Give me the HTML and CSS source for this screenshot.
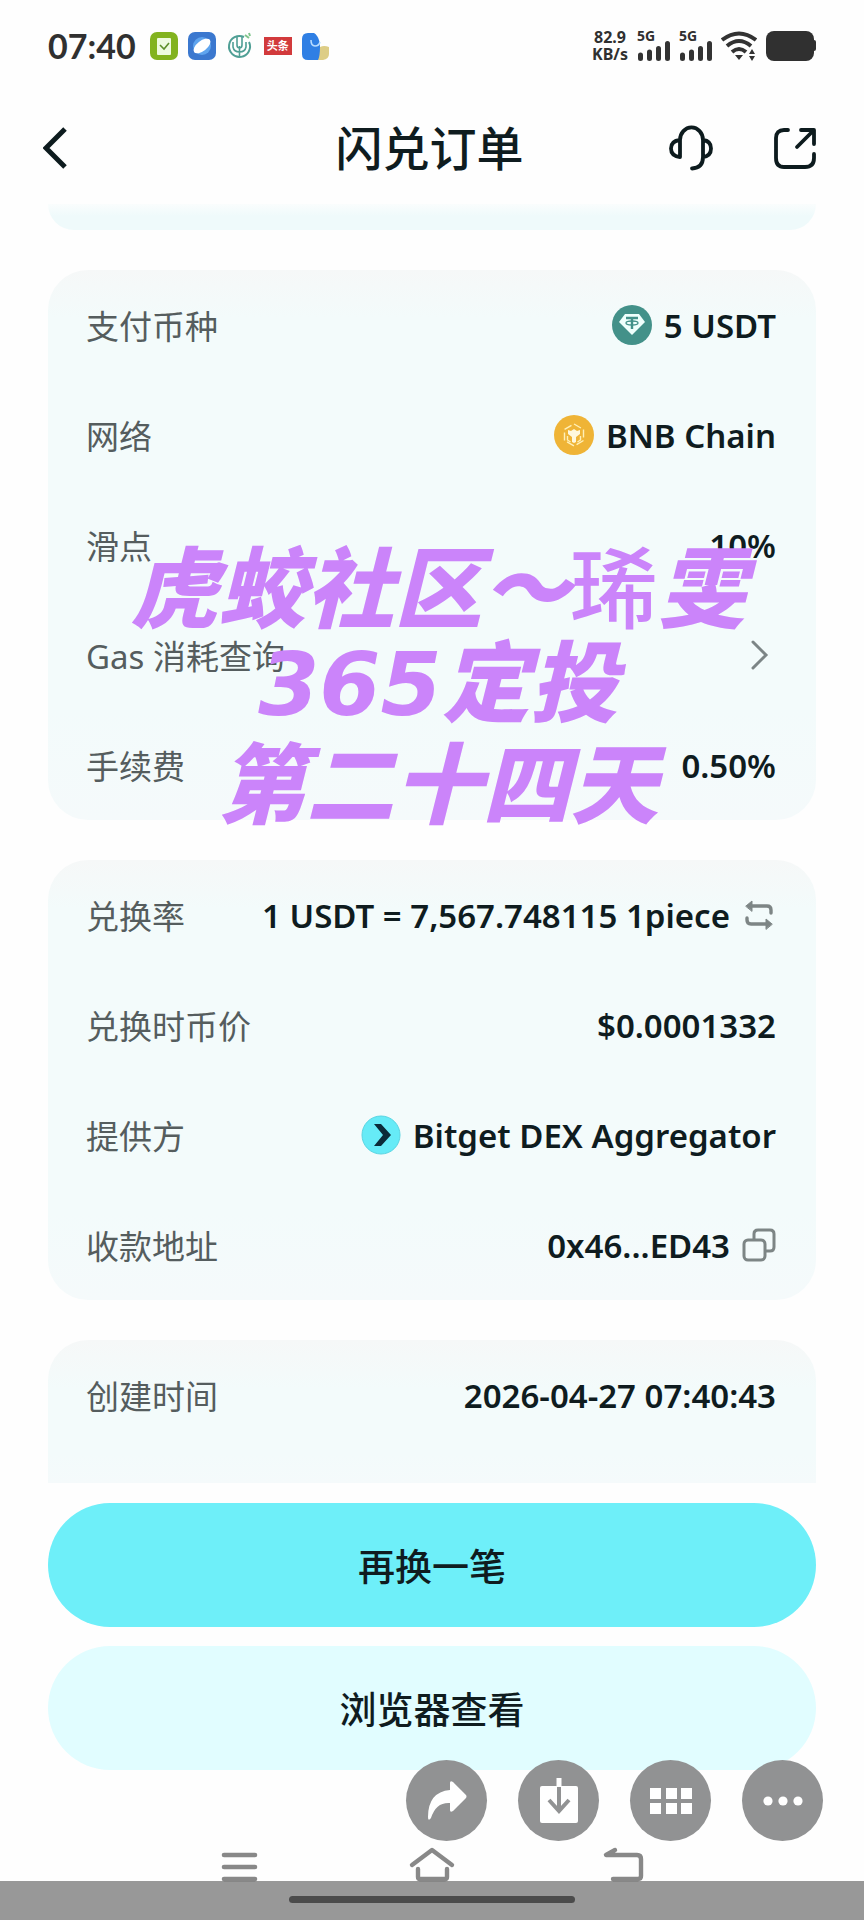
FILE: index.html
```html
<!DOCTYPE html>
<html lang="zh-CN">
<head>
<meta charset="utf-8">
<meta name="viewport" content="width=device-width, initial-scale=1">
<title>闪兑订单</title>
<link rel="stylesheet" href="styles.css">
</head>
<body>
<div class="page">
  <div class="status">
    <span class="time">07:40</span>
    <div class="apps">
      <svg viewBox="0 0 28 28" width="28" height="28"><rect width="28" height="28" rx="7" fill="#82b31f"/><rect x="7" y="6" width="14" height="17" rx="1" fill="#eefbe0"/><path d="M10 13l4 4 5-6" fill="none" stroke="#5d8f2a" stroke-width="1.6"/></svg>
      <svg viewBox="0 0 28 28" width="28" height="28"><rect width="28" height="28" rx="7" fill="#3b78cf"/><circle cx="14" cy="14" r="9" fill="#5fa4ee"/><ellipse cx="14" cy="14" rx="10" ry="5" transform="rotate(-38 14 14)" fill="#fff"/></svg>
      <svg viewBox="0 0 28 28" width="28" height="28" fill="none" stroke="#4f9f95" stroke-width="2"><path d="M18 5A10.500 10.500 0 1 0 23 10"/><path d="M11 5v8q0 3 2.500 3M16 5v8q0 3-2.500 3M13.500 14v11M7 10v5q1 5 6.500 5M20 10v5q-1 5-6.500 5" stroke-width="1.600"/><path d="M19 3l4 3M23 1l1 3" stroke="#7fc48b"/></svg>
      <span class="news">头条</span>
      <svg viewBox="0 0 28 28" width="28" height="28"><path d="M6 1h6c5 3 6 10 6 14v13H6q-6 0-6-6V7Q0 1 6 1z" fill="#2f7fe4"/><path d="M18 15q4-2 9 0v7q0 5-6 6h-5q2-4 2-13z" fill="#ddcd86"/><path d="M9 8q0 6 4 6t5-4" fill="none" stroke="#b9dcff" stroke-width="1.600"/></svg>
    </div>
    <div class="signals">
      <span class="speed">82.9<br>KB/s</span>
      <span class="cell"><b>5G</b><svg viewBox="0 0 32 20" width="32" height="20" stroke="#333" stroke-width="5" stroke-linecap="round"><path d="M2.500 14v3.500M11.500 11v6.500M20.500 7.500v10M29.500 2.500v15"/></svg></span>
      <span class="cell"><b>5G</b><svg viewBox="0 0 32 20" width="32" height="20" stroke="#333" stroke-width="5" stroke-linecap="round"><path d="M2.500 14v3.500M11.500 11v6.500M20.500 7.500v10M29.500 2.500v15"/></svg></span>
      <svg viewBox="0 0 36 32" width="36" height="32" fill="none" stroke="#333" stroke-width="4"><path d="M1 10Q18-3 35 10M6 16Q18 6 30 16M11 22Q18 16 25 22"/><path d="M14 25h8l-4 5zM28 24l3-5 3 5zM28 26h6l-3 5z" fill="#333" stroke="none"/></svg>
      <svg viewBox="0 0 50 30" width="50" height="30" fill="#303030"><rect width="48" height="30" rx="8"/><rect x="44" y="9" width="6" height="11" rx="2"/></svg>
    </div>
  </div>

  <header class="header">
    <button class="icon-btn" aria-label="返回"><svg viewBox="0 0 26 42" width="26" height="42" fill="none" stroke="#0d1b1e" stroke-width="5"><path d="M22 2L3 21l19 19"/></svg></button>
    <h1 class="title">闪兑订单</h1>
    <div class="actions">
      <button class="icon-btn" aria-label="客服"><svg viewBox="0 0 46 46" width="46" height="46" fill="none" stroke="#0d1b1e" stroke-width="3.800" stroke-linecap="round" stroke-linejoin="round"><path d="M12 32V15a11 12 0 0 1 23 0v17q0 11-11 11.500M12 15Q3 16 3 23.500T12 32M35 15q8 1 8 8.500T35 32"/></svg></button>
      <button class="icon-btn" aria-label="分享"><svg viewBox="0 0 42 42" width="42" height="42" fill="none" stroke="#0d1b1e" stroke-width="3.800" stroke-linecap="round" stroke-linejoin="round"><path d="M14 3h-4q-8 0-8 8v20q0 9 8 9h21q9 0 9-9v-4M27 3h13v14M39 4L23 20"/></svg></button>
    </div>
  </header>

  <main class="content">
    <div class="peek"></div>
    <section class="card">
      <dl class="rows">
        <div class="row"><dt>支付币种</dt><dd><svg viewBox="0 0 40 40" width="40" height="40"><circle cx="20" cy="20" r="20" fill="#439189"/><path d="M13 9h14l6 8-13 13L7 17z" fill="#effffc"/><path d="M14 13h12M20 13v11" stroke="#439189" stroke-width="2.400"/><ellipse cx="20" cy="18" rx="6" ry="2" fill="none" stroke="#439189" stroke-width="1.300"/></svg>5 USDT</dd></div>
        <div class="row"><dt>网络</dt><dd><svg viewBox="0 0 40 40" width="40" height="40"><circle cx="20" cy="20" r="20" fill="#efb436"/><path d="M20 9l9.500 5.500v11L20 31l-9.500-5.500v-11z" fill="none" stroke="#fff0b8" stroke-width="1.400" stroke-dasharray="8 3"/><path d="M14 15l3 1 3-2 3 2 3-1v4l-4 3v5l-2 1-2-1v-5l-4-3z" fill="#fff8dc"/><path d="M13.500 21v4l3 2M26.500 21v4l-3 2" fill="none" stroke="#fff0b8" stroke-width="1.400"/></svg>BNB Chain</dd></div>
        <div class="row"><dt>滑点</dt><dd>10%</dd></div>
        <div class="row"><dt>Gas 消耗查询</dt><dd><button class="icon-btn" aria-label="Gas 消耗查询"><svg viewBox="0 0 26 32" width="26" height="32" fill="none" stroke="#7c8586" stroke-width="3" stroke-linecap="round"><path d="M3 3l13 13L3 29"/></svg></button></dd></div>
        <div class="row"><dt>手续费</dt><dd>0.50%</dd></div>
      </dl>
      <p class="watermark">虎蛟社区～<span class="upright">琋</span>雯<br><span class="digits">365</span>定投<br>第二十四天</p>
    </section>

    <section class="card">
      <dl class="rows">
        <div class="row"><dt>兑换率</dt><dd>1 USDT = 7,567.748115 1piece<button class="icon-btn" aria-label="切换"><svg viewBox="0 0 34 32" width="34" height="32" fill="none" stroke="#7d8585" stroke-width="3.400" stroke-linecap="round"><path d="M8 7h17q4 0 4 4v3M26 25H9q-4 0-4-4v-2"/><path d="M4 7l6-5v10zM30 25l-6-5v10z" fill="#7d8585" stroke-width="1"/></svg></button></dd></div>
        <div class="row"><dt>兑换时币价</dt><dd>$0.0001332</dd></div>
        <div class="row"><dt>提供方</dt><dd><svg viewBox="0 0 40 40" width="40" height="40"><circle cx="20" cy="20" r="19" fill="#66ebf7" stroke="#58d5e2"/><path d="M13 9h7l10 11-10 11h-7l9-11z" fill="#0b2b38"/></svg>Bitget DEX Aggregator</dd></div>
        <div class="row"><dt>收款地址</dt><dd>0x46...ED43<button class="icon-btn" aria-label="复制"><svg viewBox="0 0 34 34" width="34" height="34" fill="none" stroke="#7d8585" stroke-width="3"><path d="M12 12V6q0-4 4-4h12q4 0 4 4v13q0 4-4 4h-5"/><rect x="2" y="12" width="21" height="20" rx="4"/></svg></button></dd></div>
      </dl>
    </section>

    <section class="card cut">
      <dl class="rows">
        <div class="row"><dt>创建时间</dt><dd>2026-04-27 07:40:43</dd></div>
      </dl>
    </section>
  </main>

  <div class="buttons">
    <button class="btn primary">再换一笔</button>
    <button class="btn">浏览器查看</button>
  </div>

  <nav class="nav">
    <button class="icon-btn" aria-label="菜单"><svg viewBox="0 0 48 36" width="48" height="36" stroke="#888" stroke-width="4.600" stroke-linecap="round"><path d="M8 8h31M8 20h31M8 32h31"/></svg></button>
    <button class="icon-btn" aria-label="主页"><svg viewBox="0 0 48 36" width="48" height="36" fill="none" stroke="#888" stroke-width="4.400" stroke-linecap="round" stroke-linejoin="round"><path d="M4 18L24 3l20 15M10 22v8q0 2 2 2h25q2 0 2-2v-8"/></svg></button>
    <button class="icon-btn" aria-label="后退"><svg viewBox="0 0 48 36" width="48" height="36" fill="none" stroke="#888" stroke-width="4.400" stroke-linecap="round" stroke-linejoin="round"><path d="M15 3L6 8h31q4 0 4 4v17q0 3-3 3H13"/></svg></button>
  </nav>

  <div class="tools">
    <button class="tool" aria-label="转发"><svg viewBox="0 0 40 40" width="40" height="40" fill="#fff"><path d="M23 2q0-3 3-1l13 13q1 1.500 0 3L26 30q-3 2-3-1v-7Q9 21 4 37q-3 4-3-1Q1 11 23 9z"/></svg></button>
    <button class="tool" aria-label="下载"><svg viewBox="0 0 38 46" width="38" height="46"><rect y="8" width="38" height="37" rx="2" fill="#fff"/><path d="M19 0v9" stroke="#fff" stroke-width="5"/><path d="M19 9v23M9 22l10 11 10-11" fill="none" stroke="#919293" stroke-width="4"/></svg></button>
    <button class="tool" aria-label="宫格"><svg viewBox="0 0 42 28" width="42" height="28" fill="#fff"><path d="M0 1h11v11H0zM16 1h11v11H16zM31 1h11v11H31zM0 16h11v11H0zM16 16h11v11H16zM31 16h11v11H31z"/></svg></button>
    <button class="tool" aria-label="更多"><svg viewBox="0 0 40 10" width="40" height="10" fill="#fff"><circle cx="5" cy="5" r="4.600"/><circle cx="20" cy="5" r="4.600"/><circle cx="35" cy="5" r="4.600"/></svg></button>
  </div>
  <div class="gesture"><span class="pill"></span></div>
</div>
</body>
</html>
```
FILE: styles.css
```css
* { box-sizing: border-box; }
body {
  margin: 0;
  background: #fefefe;
  color: #0f1c1f;
  font-family: "Noto Sans", "Noto Sans CJK SC", sans-serif;
}
button { font: inherit; color: inherit; border: 0; cursor: pointer; }
svg { display: block; flex: none; }
.page { position: relative; min-height: 100vh; display: flex; flex-direction: column; }
.icon-btn { padding: 0; background: none; flex: none; }

.status { display: flex; align-items: center; height: 92px; padding: 0 48px; color: #303030; }
.time { font: 700 34px/40px Lato, "Noto Sans", sans-serif; }
.apps { display: flex; align-items: center; gap: 10px; margin-left: 14px; }
.news { padding: 0 3px; background: #d23a3c; color: #fff; font-size: 11px; font-weight: 700; line-height: 18px; }
.signals { display: flex; align-items: center; gap: 9px; margin-left: auto; }
.speed { font: 700 16px/17px "Noto Sans", sans-serif; text-align: center; }
.cell { display: flex; flex-direction: column; width: 33px; }
.cell b { font-size: 14px; line-height: 10px; }
.cell svg { align-self: flex-end; }

.header {
  display: grid;
  grid-template-columns: 1fr auto 1fr;
  align-items: center;
  height: 112px;
  padding: 0 48px 0 43px;
}
.title { margin: 0; font-size: 47px; line-height: 60px; font-weight: 500; }
.actions { display: flex; align-items: center; justify-content: flex-end; gap: 60px; }

.content { display: flex; flex-direction: column; gap: 40px; padding: 0 48px; }
.peek { height: 26px; border-radius: 0 0 32px 32px; background: linear-gradient(#fafdfd, #effafb 12px); }
.card { position: relative; border-radius: 40px; background: linear-gradient(#f6f8f8, #f3fbfb 48px, #f3fbfb 80%, #f5fafb); }
.card.cut { border-radius: 40px 40px 0 0; padding-bottom: 33px; }
.rows { margin: 0; padding: 0 40px 0 38px; }
.row { display: flex; align-items: center; justify-content: space-between; height: 110px; }
.row dt { font-size: 33px; color: #555d5e; font-weight: 400; }
.row dd { display: flex; align-items: center; gap: 12px; margin: 0; font-size: 33px; font-weight: 600; white-space: nowrap; }

.watermark {
  position: absolute;
  top: 266px;
  left: 0;
  right: 0;
  margin: 0;
  padding-left: 12px;
  text-align: center;
  color: #cb84fa;
  font: italic 900 88px/94px "Noto Sans CJK SC", sans-serif;
  pointer-events: none;
}
.upright { font-style: normal; font-weight: 500; }
.digits { font-family: "DejaVu Sans", sans-serif; }

.buttons { display: flex; flex-direction: column; gap: 19px; padding: 20px 48px 0; }
.btn { height: 124px; border-radius: 62px; background: #e1fdff; font-size: 37px; font-weight: 500; }
.btn.primary { background: #6eeff9; }

.nav { display: flex; align-items: flex-start; justify-content: center; gap: 144px; height: 148px; padding-top: 77px; }
.tools { position: absolute; right: 41px; bottom: 79px; display: flex; gap: 31px; }
.tool {
  display: flex;
  align-items: center;
  justify-content: center;
  width: 81px;
  height: 81px;
  padding: 0;
  border-radius: 50%;
  background: #919293;
}
.gesture {
  position: absolute;
  left: 0;
  right: 0;
  bottom: 0;
  height: 39px;
  padding-top: 15px;
  background: rgba(0, 0, 0, 0.4);
}
.pill { display: block; width: 33%; height: 7px; margin: 0 auto; border-radius: 4px; background: #4b4b4b; }
```
